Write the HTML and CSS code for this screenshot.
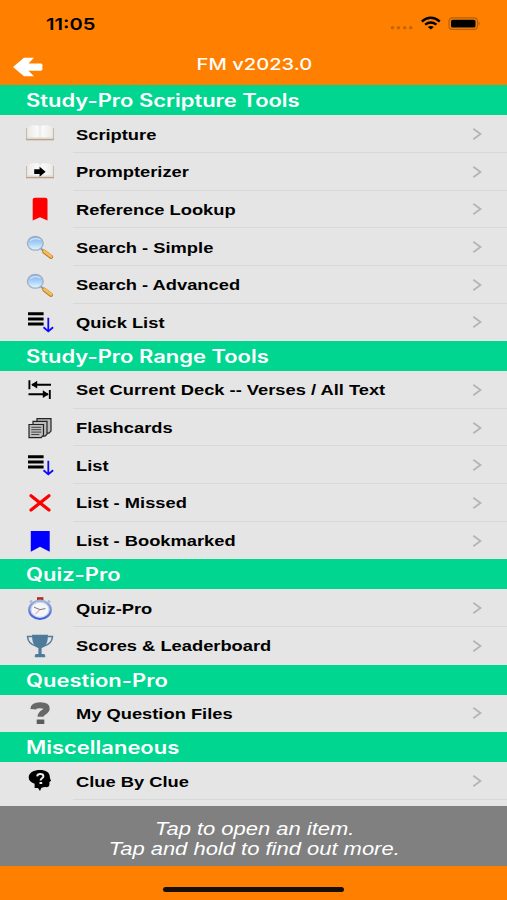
FILE: index.html
```html
<!DOCTYPE html>
<html lang="en">
<head>
<meta charset="utf-8">
<title>FM v2023.0</title>
<link rel="stylesheet" href="styles.css">
</head>
<body>
<svg class="defs" width="0" height="0" aria-hidden="true">
  <defs>
    <linearGradient id="glass" x1="0" y1="0" x2="0" y2="1"><stop offset="0" stop-color="#7fb0ec"/><stop offset=".45" stop-color="#a4cdf8"/><stop offset="1" stop-color="#e2f8ff"/></linearGradient>
    <linearGradient id="page" x1="0" x2="1"><stop offset="0" stop-color="#ebebeb"/><stop offset=".4" stop-color="#fafafa"/><stop offset=".5" stop-color="#ececec"/><stop offset=".6" stop-color="#fafafa"/><stop offset="1" stop-color="#ebebeb"/></linearGradient>
    <linearGradient id="rim" x1="0" y1="0" x2="0" y2="1"><stop offset="0" stop-color="#9db6d2"/><stop offset="1" stop-color="#4260d8"/></linearGradient>
  </defs>
  <symbol id="book" viewBox="0 0 32 28">
    <path d="M2.500 8v11.500M29.500 8v11.500" stroke="#cdbba6" stroke-width="1"/>
    <path d="M2 19.600h28" stroke="#bda283" stroke-width="1.400"/>
    <path d="M3 18h26" stroke="#dcd8d2" stroke-width="1.600"/>
    <path d="M4 17.400V7Q6 5 10 5.200Q14.500 5 16 6.200Q17.500 5 22 5.200Q26 5 28 7v10.400H4Z" fill="url(#page)"/>
  </symbol>
  <symbol id="prompt" viewBox="0 0 32 28">
    <use href="#book"/>
    <path d="M10.200 11.300h5.400V8.700l6 5-6 5v-2.600h-5.400Z" fill="#000"/>
  </symbol>
  <symbol id="ribbon" viewBox="0 0 32 28">
    <path d="M10.800 2.700h10.700q2 0 2 2v20.800L16 22.200 8.700 25.500V4.700q0-2 2.100-2Z" fill="#f00"/>
  </symbol>
  <symbol id="search" viewBox="0 0 32 28">
    <path d="m16.800 15.600 4 3.400" stroke="#8d98a5" stroke-width="2"/>
    <path d="m20.400 18.800 6.600 5" stroke="#b97b25" stroke-width="4.200" stroke-linecap="round"/>
    <path d="m20.400 18.400 6.600 5" stroke="#f5bd55" stroke-width="2.800" stroke-linecap="round"/>
    <ellipse cx="11.300" cy="10.300" rx="7.900" ry="6.900" fill="url(#glass)" stroke="#a2aebc" stroke-width="1.300"/>
    <path d="M6 7.500q5-3.500 10.500-.5" stroke="#cde3fb" stroke-width="1.300" fill="none"/>
  </symbol>
  <symbol id="list" viewBox="0 0 32 28">
    <path d="M4 5.800h15.600M4 11h15.600M4 16h15.600" stroke="#000" stroke-width="2.900"/>
    <path d="M24.300 9.700v13.200M19.500 19.200l4.800 4.200 4.800-4.200" fill="none" stroke="#0a0aff" stroke-width="1.800"/>
  </symbol>
  <symbol id="range" viewBox="0 0 32 28">
    <path d="M5.400 4.200v9M25.800 14v9M8 8.700h19M4.500 18.200H24" stroke="#000" stroke-width="1.900"/>
    <path d="m7.200 8.700 6-3.900v7.800ZM24.800 18.200l-6-3.900v7.800Z"/>
  </symbol>
  <symbol id="cards" viewBox="0 0 32 28">
    <g fill="#bdbdbd" stroke="#222" stroke-width="1.200">
      <path d="M13 4.600h14v12.500l-2 2H13Z"/><path d="M9 7.400h14v12.800l-2 2H9Z"/><path d="M5 10.500h14.500v10.600l-2.300 2.600H5Z"/>
    </g>
    <path d="M7.300 13.300h10M7.300 15.700h10M7.300 18.100h10M7.300 20.500h8" stroke="#444" stroke-width="1"/>
  </symbol>
  <symbol id="cross" viewBox="0 0 32 28">
    <path d="m7 6.700 18 14.400M25 6.700 7 21.100" stroke="#f00" stroke-width="3.200" stroke-linecap="round"/>
  </symbol>
  <symbol id="flag" viewBox="0 0 32 28">
    <path d="M6.800 3.900h18.900v20.900L16 19.700l-9.200 5.100Z" fill="#00f"/>
  </symbol>
  <symbol id="watch" viewBox="0 0 32 28">
    <path d="M16 5v3" stroke="#aaa" stroke-width="4"/>
    <path d="M13 3.200h6.400v2.900H13Z" fill="#b02a20"/>
    <path d="m6 8.500 2-2M26 8.500l-2-2" stroke="#a9b8cc" stroke-width="2"/>
    <ellipse cx="16" cy="15.800" rx="10.700" ry="9.100" fill="#f5f6fa" stroke="url(#rim)" stroke-width="2.300"/>
    <ellipse cx="16" cy="15.800" rx="9" ry="7.500" fill="none" stroke="#bac8ee" stroke-width=".8"/>
    <path d="m10 13.200 6 2.400 5.400-1" stroke="#777" stroke-width="1" fill="none"/><path d="m16 15.500-4.600 4.500" stroke="#ee7766" stroke-width=".9"/>
  </symbol>
  <symbol id="trophy" viewBox="0 0 32 28">
    <path d="M8 4.500H3.500Q4 12 12 14M24 4.500h4.500Q28 12 20 14" fill="none" stroke="#527d9c" stroke-width="1.500"/>
    <path d="M8 2.700h16c0 8-2.400 12-6.400 13.400v6h2.600l1 1.300v1.900H10.800v-1.900l1-1.300h2.600v-6C10.400 14.700 8 10.700 8 2.700Z" fill="#4f7b9b"/>
  </symbol>
  <symbol id="query" viewBox="0 0 32 28">
    <path d="M9.300 10.200C9.500 7 12 6.300 16.200 6.300c4.400 0 6.500 1 6.500 3.300 0 4-6.200 3.400-6.200 8.200" fill="none" stroke="#686868" stroke-width="6"/>
    <path d="M12.700 20.500h7.600v4.500h-7.600Z" fill="#5c5c5c"/>
  </symbol>
  <symbol id="clue" viewBox="0 0 32 28">
    <path d="M16 3c5.800 0 9.600 2.300 9.800 6.500.1 1.800.5 2.700 1.300 4.300l-1.700 1.200c.3 4.200-.5 5.700-4.700 5l-3.300.8L16 24.100l-2-3.200h-3.400v-4.200C6.500 15.300 4.500 13.100 4.700 10 5.200 5.300 10 3 16 3Z"/>
    <path d="M13.200 9.300c.2-2 1.400-2.300 3-2.300 2 0 3.200.7 3.200 2.200 0 2-2.800 2.100-2.800 4.300M15.500 16h2.700" fill="none" stroke="#eee" stroke-width="2"/>
  </symbol>
  <symbol id="chev" viewBox="0 0 10 14"><path d="m1.300 1.700 7.200 5.300-7.200 5.300" fill="none" stroke="#b4b4b6" stroke-width="1.800"/></symbol>
</svg>

<header class="top">
  <div class="status">
    <span class="clock">11:05</span>
    <svg class="signals" width="92" height="16" viewBox="0 0 92 16">
      <g fill="#c06800"><circle cx="3.500" cy="11.700" r="1.800"/><circle cx="9.500" cy="11.700" r="1.800"/><circle cx="15.700" cy="11.700" r="1.800"/><circle cx="21.800" cy="11.700" r="1.800"/></g>
      <path d="M32.800 5.500Q41.800 -2 50.800 5.500M36.100 8.600Q41.800 4.200 47.500 8.600" fill="none" stroke="#000" stroke-width="2.400"/>
      <path d="M38.800 11Q41.800 9 44.800 11L41.800 13.600Z"/>
      <rect x="60" y="1.900" width="28.500" height="11.400" rx="3.300" fill="none" stroke="#b06010" stroke-width="1.200"/>
      <rect x="62" y="3.700" width="24.500" height="7.800" rx="1.600"/>
      <path d="M89.600 5.600q2.400 2 0 4Z" fill="#b06010"/>
    </svg>
  </div>
  <div class="nav">
    <svg class="back" width="30" height="20" viewBox="0 0 30 20"><path d="M0 10 11 .7h10L15.500 6.500H28.200l1.200 1v5.200l-1.200 1H15.500l5.500 5.600H11Z" fill="#fff"/></svg>
    <h1 class="title"><span>FM v2023.0</span></h1>
  </div>
</header>

<main>
  <section>
    <h2><span>Study-Pro Scripture Tools</span></h2>
    <ul>
      <li><svg class="icon"><use href="#book"/></svg><div class="row"><span>Scripture</span><svg class="chev"><use href="#chev"/></svg></div></li>
      <li><svg class="icon"><use href="#prompt"/></svg><div class="row"><span>Prompterizer</span><svg class="chev"><use href="#chev"/></svg></div></li>
      <li><svg class="icon"><use href="#ribbon"/></svg><div class="row"><span>Reference Lookup</span><svg class="chev"><use href="#chev"/></svg></div></li>
      <li><svg class="icon"><use href="#search"/></svg><div class="row"><span>Search - Simple</span><svg class="chev"><use href="#chev"/></svg></div></li>
      <li><svg class="icon"><use href="#search"/></svg><div class="row"><span>Search - Advanced</span><svg class="chev"><use href="#chev"/></svg></div></li>
      <li><svg class="icon"><use href="#list"/></svg><div class="row"><span>Quick List</span><svg class="chev"><use href="#chev"/></svg></div></li>
    </ul>
  </section>
  <section>
    <h2><span>Study-Pro Range Tools</span></h2>
    <ul>
      <li><svg class="icon"><use href="#range"/></svg><div class="row"><span>Set Current Deck -- Verses / All Text</span><svg class="chev"><use href="#chev"/></svg></div></li>
      <li><svg class="icon"><use href="#cards"/></svg><div class="row"><span>Flashcards</span><svg class="chev"><use href="#chev"/></svg></div></li>
      <li><svg class="icon"><use href="#list"/></svg><div class="row"><span>List</span><svg class="chev"><use href="#chev"/></svg></div></li>
      <li><svg class="icon"><use href="#cross"/></svg><div class="row"><span>List - Missed</span><svg class="chev"><use href="#chev"/></svg></div></li>
      <li><svg class="icon"><use href="#flag"/></svg><div class="row"><span>List - Bookmarked</span><svg class="chev"><use href="#chev"/></svg></div></li>
    </ul>
  </section>
  <section>
    <h2><span>Quiz-Pro</span></h2>
    <ul>
      <li><svg class="icon"><use href="#watch"/></svg><div class="row"><span>Quiz-Pro</span><svg class="chev"><use href="#chev"/></svg></div></li>
      <li><svg class="icon"><use href="#trophy"/></svg><div class="row"><span>Scores &amp; Leaderboard</span><svg class="chev"><use href="#chev"/></svg></div></li>
    </ul>
  </section>
  <section>
    <h2><span>Question-Pro</span></h2>
    <ul>
      <li><svg class="icon"><use href="#query"/></svg><div class="row"><span>My Question Files</span><svg class="chev"><use href="#chev"/></svg></div></li>
    </ul>
  </section>
  <section class="open-end">
    <h2><span>Miscellaneous</span></h2>
    <ul>
      <li><svg class="icon"><use href="#clue"/></svg><div class="row"><span>Clue By Clue</span><svg class="chev"><use href="#chev"/></svg></div></li>
    </ul>
  </section>
</main>

<footer class="hint">
  <p><span>Tap to open an item.</span></p>
  <p><span>Tap and hold to find out more.</span></p>
</footer>
<div class="home"><div class="bar"></div></div>
</body>
</html>
```
FILE: styles.css
```css
* { box-sizing: border-box; margin: 0; padding: 0; }

body {
  width: 507px;
  height: 900px;
  overflow: hidden;
  display: flex;
  flex-direction: column;
  background: #ff8000;
  font-family: "Liberation Sans", Arial, sans-serif;
}

.defs { position: absolute; }

/* Wide lettering is used across the whole interface. */
span { display: inline-block; white-space: nowrap; transform: scaleX(1.22); transform-origin: left center; }

.top { height: 85.3px; flex: none; }
.status { height: 46px; display: flex; justify-content: space-between; padding: 16px 26px 0 46px; }
.clock { font: 600 16.5px/16px Inter, sans-serif; }
.nav { height: 39px; display: flex; padding-left: 13px; }
.back { margin-top: 11px; flex: none; }
.title { flex: 1; padding-right: 42px; text-align: center; font: 550 16.5px/37px Inter, sans-serif; color: #fff; }
.title span, .hint span { transform-origin: center; }

main { flex: none; height: 720.5px; background: #e5e5e5; }

h2 {
  height: 30px;
  padding-left: 26px;
  background: #00d690;
  color: #fff;
  font: 600 18px/32px Inter, sans-serif;
}

ul { list-style: none; }
li { display: flex; height: 37.65px; padding-left: 24px; align-items: center; }
.icon { width: 32px; height: 28px; flex: none; }
.row {
  flex: 1;
  height: 100%;
  margin-left: 17px;
  padding: 1px 25px 0 3px;
  display: flex;
  align-items: center;
  justify-content: space-between;
  border-bottom: 1px solid #d8d8d8;
  font-weight: bold;
  font-size: 15px;
}
li:last-child .row { border-color: transparent; }
.open-end li:last-child .row { border-color: #d8d8d8; }
.chev { width: 10px; height: 14px; flex: none; }

.hint {
  flex: none;
  height: 60px;
  padding: 13px 0 0 2px;
  background: #808080;
  color: #fff;
  text-align: center;
  font-style: italic;
  font-size: 18px;
  line-height: 20.7px;
}
.hint p { height: 20.7px; }

.home { flex: 1; display: flex; justify-content: center; align-items: flex-start; padding-top: 21px; }
.bar { width: 181px; height: 5px; border-radius: 3px; background: #141008; }
```
